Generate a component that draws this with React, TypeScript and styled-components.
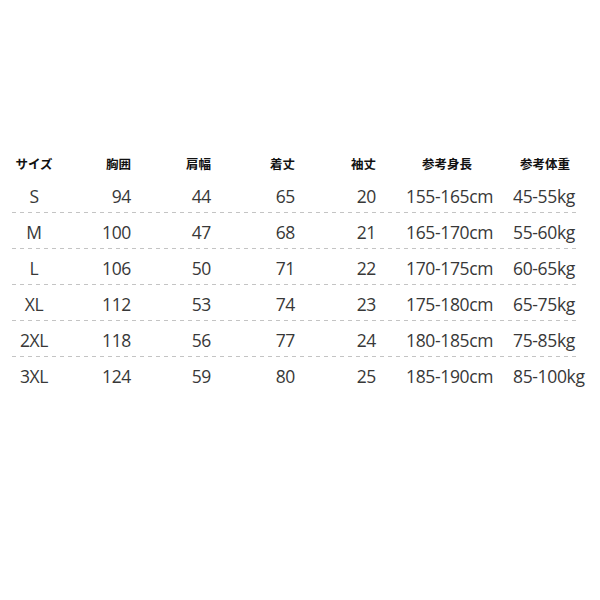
import { createGlobalStyle, styled } from "styled-components";

type Align = "left" | "right" | "center";

interface Column {
  label: string;
  width: number;
  align: Align;
  pad: number;
  headAlign: Align;
  headPad: number;
}

const columns: Column[] = [
  { label: "サイズ", width: 44, align: "center", pad: 0, headAlign: "center", headPad: 0 },
  { label: "胸囲", width: 75, align: "right", pad: 0, headAlign: "right", headPad: 0 },
  { label: "肩幅", width: 80, align: "right", pad: 0, headAlign: "right", headPad: 0 },
  { label: "着丈", width: 84, align: "right", pad: 0, headAlign: "right", headPad: 0 },
  { label: "袖丈", width: 81, align: "right", pad: 0, headAlign: "right", headPad: 2 },
  { label: "参考身長", width: 137, align: "left", pad: 30, headAlign: "left", headPad: 46 },
  { label: "参考体重", width: 67, align: "left", pad: 0, headAlign: "left", headPad: 7 },
];

const rows = [
  ["S", "94", "44", "65", "20", "155-165cm", "45-55kg"],
  ["M", "100", "47", "68", "21", "165-170cm", "55-60kg"],
  ["L", "106", "50", "71", "22", "170-175cm", "60-65kg"],
  ["XL", "112", "53", "74", "23", "175-180cm", "65-75kg"],
  ["2XL", "118", "56", "77", "24", "180-185cm", "75-85kg"],
  ["3XL", "124", "59", "80", "25", "185-190cm", "85-100kg"],
];

const GlobalStyle = createGlobalStyle`
  html, body {
    margin: 0;
    padding: 0;
    background: #ffffff;
  }
`;

const Page = styled.div`
  width: 600px;
  height: 600px;
  box-sizing: border-box;
  padding: 150px 20px 0 12px;
  background: #ffffff;
`;

const Grid = styled.div`
  display: grid;
  grid-template-columns: ${columns.map((c) => `${c.width}px`).join(" ")};
`;

const HeadRow = styled(Grid)`
  height: 27px;
  align-items: center;
`;

const Row = styled(Grid)<{ $last: boolean }>`
  height: 36px;
  align-items: center;
  box-sizing: border-box;
  padding-top: 1px;
  background-image: ${(p) =>
    p.$last
      ? "none"
      : "repeating-linear-gradient(to right, #c4c4c4 0 4px, transparent 4px 8px)"};
  background-size: 100% 1px;
  background-position: left bottom;
  background-repeat: no-repeat;
`;

const HeadCell = styled.div<{ $align: Align; $pad: number }>`
  text-align: ${(p) => p.$align};
  padding-left: ${(p) => p.$pad}px;
  font-family: "Noto Sans CJK JP", sans-serif;
  font-weight: 700;
  font-size: 12.5px;
  color: #111111;
  white-space: nowrap;
`;

const Cell = styled.div<{ $align: Align; $pad: number }>`
  text-align: ${(p) => p.$align};
  padding-left: ${(p) => p.$pad}px;
  font-family: "Open Sans", "Noto Sans", sans-serif;
  font-size: 17.5px;
  letter-spacing: -0.35px;
  color: #383838;
  white-space: nowrap;
`;

export default function App() {
  return (
    <>
      <GlobalStyle />
      <Page>
        <HeadRow>
          {columns.map((c) => (
            <HeadCell key={c.label} $align={c.headAlign} $pad={c.headPad}>
              {c.label}
            </HeadCell>
          ))}
        </HeadRow>
        {rows.map((r, i) => (
          <Row key={r[0]} $last={i === rows.length - 1}>
            {r.map((v, j) => (
              <Cell key={j} $align={columns[j].align} $pad={columns[j].pad}>
                {v}
              </Cell>
            ))}
          </Row>
        ))}
      </Page>
    </>
  );
}
